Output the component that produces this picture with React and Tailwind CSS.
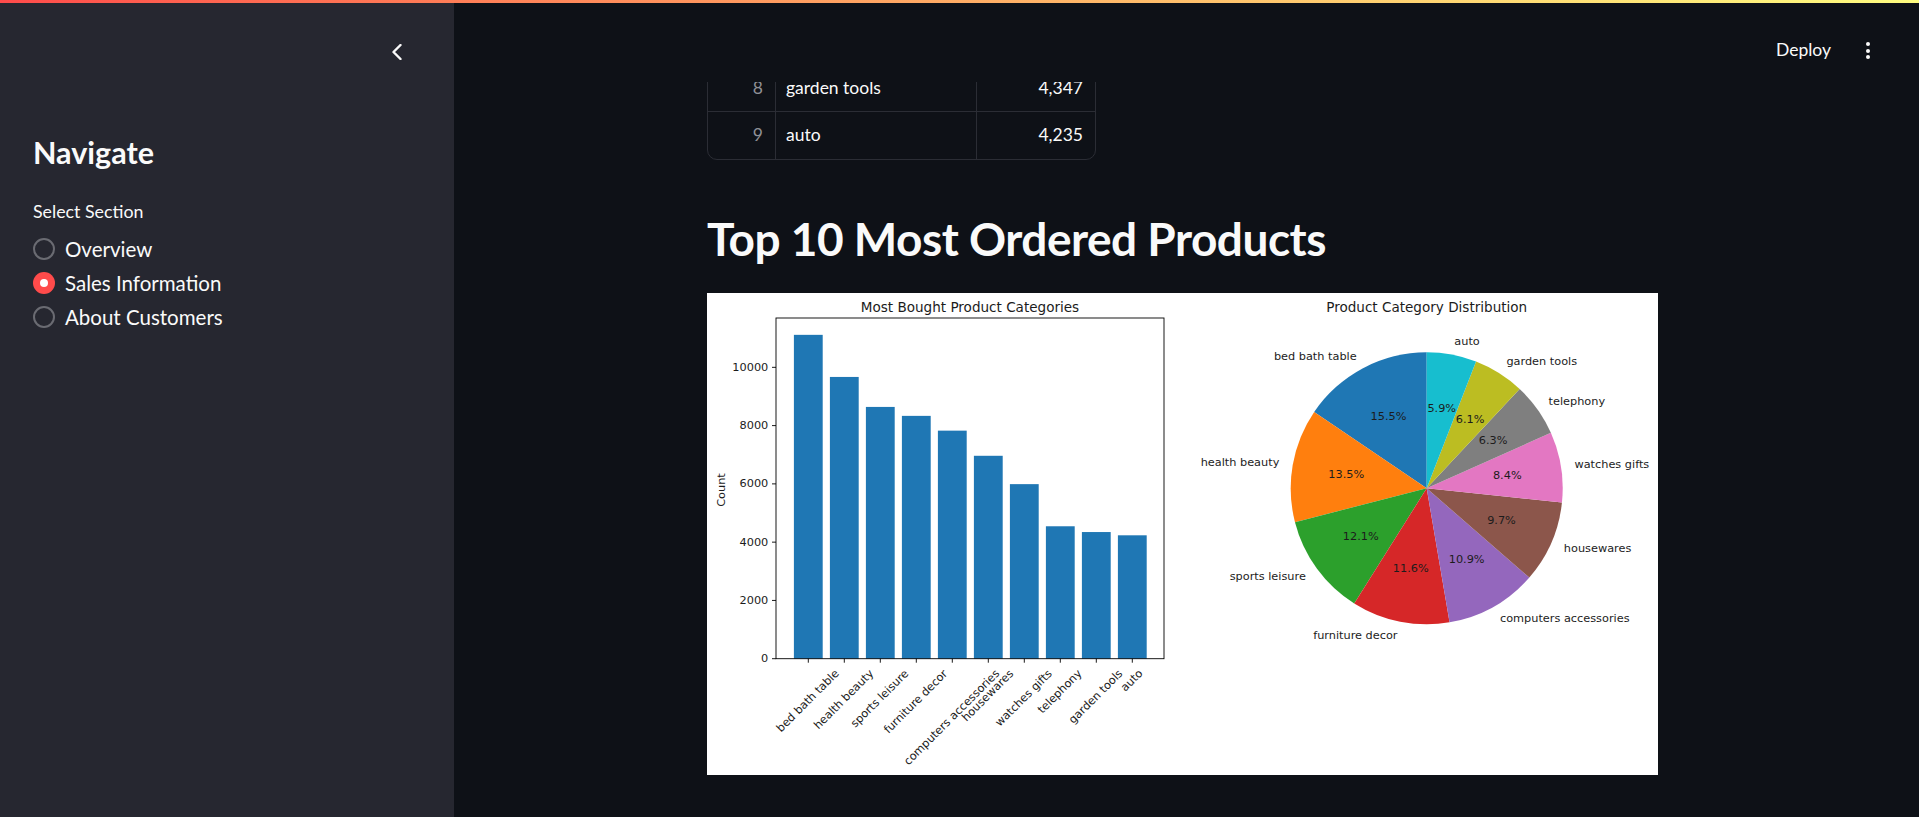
import React from 'react';

const categories = [
  { name: 'bed bath table', count: 11115 },
  { name: 'health beauty', count: 9670 },
  { name: 'sports leisure', count: 8641 },
  { name: 'furniture decor', count: 8334 },
  { name: 'computers accessories', count: 7827 },
  { name: 'housewares', count: 6964 },
  { name: 'watches gifts', count: 5991 },
  { name: 'telephony', count: 4545 },
  { name: 'garden tools', count: 4347 },
  { name: 'auto', count: 4235 },
];

const pieColors = ['#1f77b4', '#ff7f0e', '#2ca02c', '#d62728', '#9467bd', '#8c564b', '#e377c2', '#7f7f7f', '#bcbd22', '#17becf'];

// DejaVu Sans advance widths (em), used to place the rotated tick labels
const glyphW = {
  a: 0.613, b: 0.635, c: 0.55, d: 0.635, e: 0.615, f: 0.352, g: 0.635, h: 0.634, i: 0.278, k: 0.579,
  l: 0.278, m: 0.974, n: 0.634, o: 0.612, p: 0.635, r: 0.411, s: 0.521, t: 0.392, u: 0.634, v: 0.592,
  w: 0.818, x: 0.592, y: 0.592, ' ': 0.318,
};
const textWidth = (s, size) => s.split('').reduce((w, ch) => w + (glyphW[ch] ?? 0.6), 0) * size;

const FS = 11.3;
const INK = '#1c1c1c';

const BarChart = () => {
  const left = 69, right = 457, top = 25, bottom = 365.7;
  const scale = 0.029137;
  const yOf = (v) => bottom - v * scale;
  const xOf = (i) => 101.3 + 36 * i;
  const c = Math.SQRT1_2;
  const T = 375;

  return (
    <g fontFamily="'DejaVu Sans', sans-serif" fill={INK}>
      <text x={263} y={14} fontSize={13.55} textAnchor="middle" dominantBaseline="central">Most Bought Product Categories</text>
      {categories.map((d, i) => (
        <rect key={d.name} x={xOf(i) - 14.4} y={yOf(d.count)} width={28.8} height={bottom - yOf(d.count)} fill="#1f77b4" />
      ))}
      <rect x={left} y={top} width={right - left} height={bottom - top} fill="none" stroke="#000" strokeWidth={0.9} />
      {[0, 2000, 4000, 6000, 8000, 10000].map((v) => (
        <g key={v}>
          <line x1={left - 4} x2={left} y1={yOf(v)} y2={yOf(v)} stroke="#000" strokeWidth={0.9} />
          <text x={61.3} y={yOf(v)} fontSize={FS} textAnchor="end" dominantBaseline="central">{v}</text>
        </g>
      ))}
      {categories.map((d, i) => {
        const L = textWidth(d.name, FS);
        const A = 0.76 * FS, D = 0.24 * FS;
        const px = xOf(i) - (c * (L + D - A)) / 2;
        const py = T + c * (L + A);
        return (
          <g key={d.name}>
            <line x1={xOf(i)} x2={xOf(i)} y1={bottom} y2={bottom + 4} stroke="#000" strokeWidth={0.9} />
            <text x={px} y={py} fontSize={FS} transform={`rotate(-45 ${px} ${py})`}>{d.name}</text>
          </g>
        );
      })}
      <text x={14.7} y={197} fontSize={FS} textAnchor="middle" dominantBaseline="central" transform="rotate(-90 14.7 197)">Count</text>
    </g>
  );
};

const PieChart = () => {
  const cx = 719.7, cy = 195.3, r = 136;
  const total = categories.reduce((s, d) => s + d.count, 0);
  let start = 90;
  const pt = (deg, rad) => [cx + rad * Math.cos((deg * Math.PI) / 180), cy - rad * Math.sin((deg * Math.PI) / 180)];

  const slices = categories.map((d, i) => {
    const sweep = (d.count / total) * 360;
    const a1 = start;
    const a2 = start + sweep;
    start = a2;
    const [x1, y1] = pt(a1, r);
    const [x2, y2] = pt(a2, r);
    const mid = (a1 + a2) / 2;
    const [lx, ly] = pt(mid, r * 1.1);
    const [tx, ty] = pt(mid, r * 0.6);
    const cosMid = Math.cos((mid * Math.PI) / 180);
    return {
      ...d,
      color: pieColors[i],
      path: `M${cx} ${cy} L${x1} ${y1} A${r} ${r} 0 ${sweep > 180 ? 1 : 0} 0 ${x2} ${y2} Z`,
      lx, ly, tx, ty,
      anchor: Math.abs(cosMid) < 0.01 ? 'middle' : cosMid > 0 ? 'start' : 'end',
      pct: `${((d.count / total) * 100).toFixed(1)}%`,
    };
  });

  return (
    <g fontFamily="'DejaVu Sans', sans-serif" fill={INK}>
      <text x={cx} y={13.7} fontSize={13.55} textAnchor="middle" dominantBaseline="central">Product Category Distribution</text>
      {slices.map((s) => (
        <path key={s.name} d={s.path} fill={s.color} />
      ))}
      {slices.map((s) => (
        <g key={s.name + '-t'}>
          <text x={s.lx} y={s.ly} fontSize={FS} textAnchor={s.anchor} dominantBaseline="central">{s.name}</text>
          <text x={s.tx} y={s.ty} fontSize={FS} textAnchor="middle" dominantBaseline="central">{s.pct}</text>
        </g>
      ))}
    </g>
  );
};

const Radio = ({ label, checked }) => (
  <div className="flex items-center h-[34px]">
    {checked ? (
      <span className="w-[22px] h-[22px] rounded-full bg-[#ff4b4b] flex items-center justify-center">
        <span className="w-[8px] h-[8px] rounded-full bg-white" />
      </span>
    ) : (
      <span className="w-[22px] h-[22px] rounded-full border-2 border-[#6a6b72]" />
    )}
    <span className="ml-[10px] text-[20.5px] leading-[24px] text-[#fafafa]">{label}</span>
  </div>
);

const App = () => {
  return (
    <div className="w-[1919px] h-[817px] overflow-hidden bg-[#0e1117] font-[Lato,sans-serif]">
      <div className="h-[3px] bg-gradient-to-r from-[#ff4b4b] to-[#fffd80]" />
      <div className="flex h-[814px]">
        <aside className="w-[454px] shrink-0 bg-[#262730] flex flex-col">
          <div className="pt-[41px] pl-[389px]">
            <svg width="16" height="16" viewBox="0 0 16 16" fill="none" stroke="#fafafa" strokeWidth="2.4" strokeLinecap="round" strokeLinejoin="round">
              <path d="M11.5 1 L4.5 8 L11.5 15" />
            </svg>
          </div>
          <div className="pl-[33px]">
            <h2 className="mt-[77px] text-[30.5px] leading-none font-bold text-[#fafafa]">Navigate</h2>
            <div className="mt-[33px] text-[17.8px] leading-[20px] text-[#fafafa]">Select Section</div>
            <div className="mt-[11px]">
              <Radio label="Overview" />
              <Radio label="Sales Information" checked />
              <Radio label="About Customers" />
            </div>
          </div>
        </aside>

        <main className="flex-1 flex flex-col">
          <header className="h-[79px] shrink-0 flex items-start justify-end pr-[49px]">
            <span className="mt-[37px] text-[17.5px] leading-[20px] text-[#fafafa]">Deploy</span>
            <div className="ml-[35px] mt-[39px] flex flex-col gap-[2.5px]">
              <span className="w-[4px] h-[4px] rounded-full bg-[#fafafa]" />
              <span className="w-[4px] h-[4px] rounded-full bg-[#fafafa]" />
              <span className="w-[4px] h-[4px] rounded-full bg-[#fafafa]" />
            </div>
          </header>

          <div className="ml-[253px] w-[951px]">
            <div className="h-[78px] overflow-hidden flex flex-col justify-end">
              <div className="w-[389px] border border-[#2b2d35] rounded-b-[10px] text-[17.5px] text-[#fafafa]">
                {[
                  { i: 8, name: 'garden tools', v: '4,347' },
                  { i: 9, name: 'auto', v: '4,235' },
                ].map((row, k) => (
                  <div key={row.i} className={`flex h-[47px] items-center ${k === 0 ? 'border-b border-[#2b2d35]' : ''}`}>
                    <div className="w-[68px] h-full flex items-center justify-end pr-[12px] text-[#8f9096] border-r border-[#2b2d35]">{row.i}</div>
                    <div className="w-[201px] h-full flex items-center pl-[10px] border-r border-[#2b2d35]">{row.name}</div>
                    <div className="flex-1 h-full flex items-center justify-end pr-[12px]">{row.v}</div>
                  </div>
                ))}
              </div>
            </div>

            <div className="h-[133px] pt-[56px]">
              <h1 className="text-[46px] leading-none font-bold tracking-[-0.5px] text-[#fafafa]">Top 10 Most Ordered Products</h1>
            </div>

            <div className="w-[951px] h-[482px] bg-white">
              <svg width="951" height="482" viewBox="0 0 951 482">
                <BarChart />
                <PieChart />
              </svg>
            </div>
          </div>
        </main>
      </div>
    </div>
  );
};

export default App;
